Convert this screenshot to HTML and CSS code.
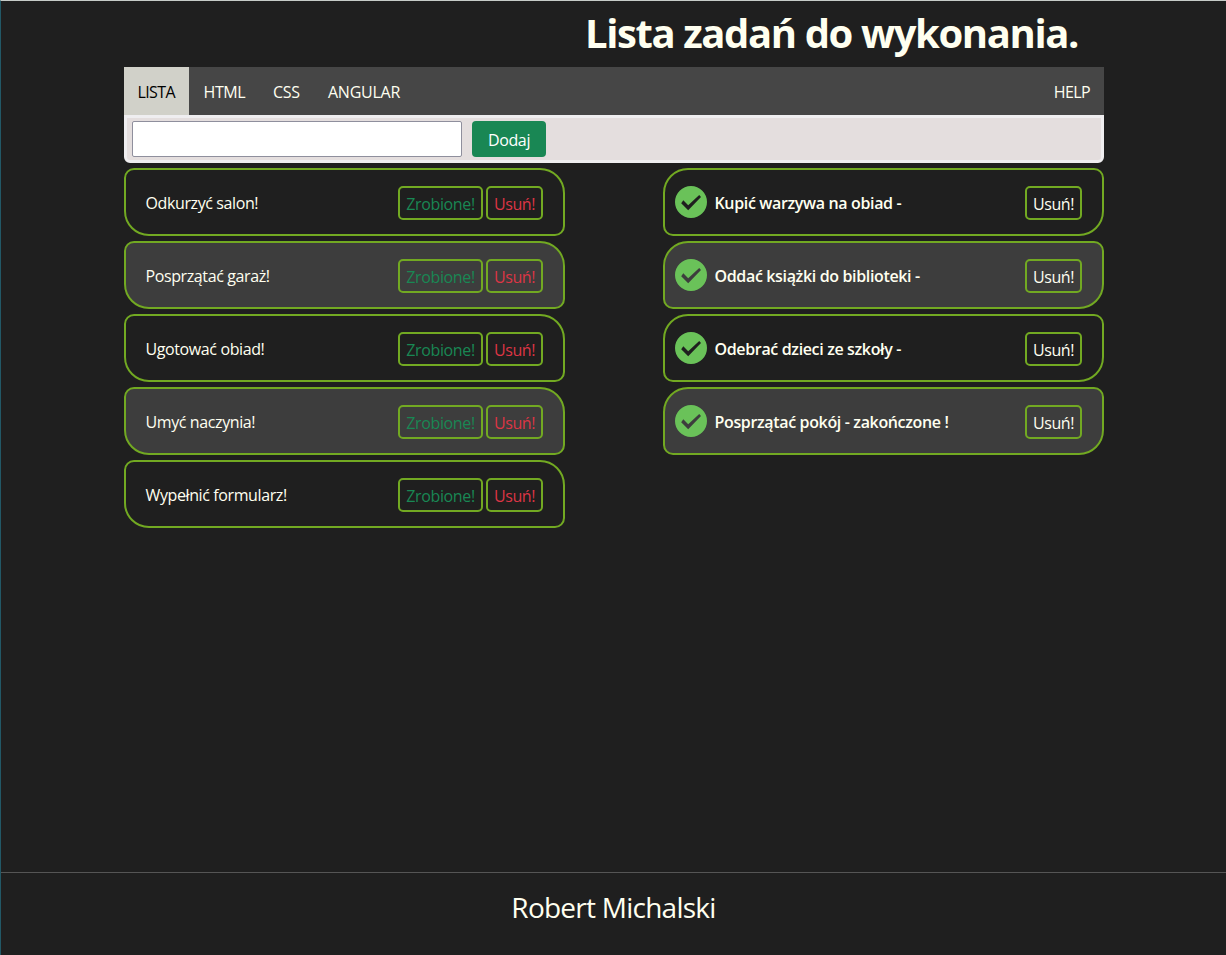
FILE: index.html
```html
<!DOCTYPE html>
<html lang="pl">
<head>
<meta charset="utf-8">
<title>Lista zadań</title>
<link rel="stylesheet" href="styles.css">
</head>
<body>
<svg class="sprite" aria-hidden="true"><symbol id="check" viewBox="0 0 32 32"><path fill="#6ac259" fill-rule="evenodd" d="M16 0a16 16 0 1 0 0 32a16 16 0 1 0 0-32zM24.2 9L26 11L13.2 24.2L6.2 17.2L8.3 14.2L13.2 19.2z"/></symbol></svg>
<div class="page">
<header class="header"><h1 class="title"><span>Lista zadań do wykonania.</span></h1></header>
<nav class="nav">
<a class="tab active"><span>LISTA</span></a>
<a class="tab html"><span>HTML</span></a>
<a class="tab css"><span>CSS</span></a>
<a class="tab angular"><span>ANGULAR</span></a>
<a class="tab help"><span>HELP</span></a>
</nav>
<form class="add"><input class="field" type="text" aria-label="Zadanie"><button class="submit" type="button">Dodaj</button></form>
<main class="columns">
<ul class="list todo">
<li class="task"><span class="name">Odkurzyć salon!</span><button class="btn done">Zrobione!</button><button class="btn remove">Usuń!</button></li>
<li class="task"><span class="name">Posprzątać garaż!</span><button class="btn done">Zrobione!</button><button class="btn remove">Usuń!</button></li>
<li class="task"><span class="name">Ugotować obiad!</span><button class="btn done">Zrobione!</button><button class="btn remove">Usuń!</button></li>
<li class="task"><span class="name">Umyć naczynia!</span><button class="btn done">Zrobione!</button><button class="btn remove">Usuń!</button></li>
<li class="task"><span class="name">Wypełnić formularz!</span><button class="btn done">Zrobione!</button><button class="btn remove">Usuń!</button></li>
</ul>
<ul class="list finished">
<li class="task"><svg class="check"><use href="#check"/></svg><span class="name">Kupić warzywa na obiad -</span><button class="btn">Usuń!</button></li>
<li class="task"><svg class="check"><use href="#check"/></svg><span class="name">Oddać książki do biblioteki -</span><button class="btn">Usuń!</button></li>
<li class="task"><svg class="check"><use href="#check"/></svg><span class="name">Odebrać dzieci ze szkoły -</span><button class="btn">Usuń!</button></li>
<li class="task"><svg class="check"><use href="#check"/></svg><span class="name">Posprzątać pokój - zakończone !</span><button class="btn">Usuń!</button></li>
</ul>
</main>
<footer class="footer"><span>Robert Michalski</span></footer>
</div>
</body>
</html>
```
FILE: styles.css
```css
* { box-sizing: border-box; }
body { margin: 0; background: #1f1f1f; color: ivory; font: 16px/24px "Open Sans", "Noto Sans", sans-serif; letter-spacing: -0.35px; }
.sprite { display: none; }
.page { height: 955px; display: flex; flex-direction: column; border-top: 1px solid #c6cbc8; border-left: 1px solid #225866; overflow: hidden; }
.header, .nav, .add, .columns { width: 980px; margin-left: 123px; flex: none; }
.header { height: 66px; padding: 8px 26px 0 0; }
.title { margin: 0; font-size: 40px; line-height: 48px; font-weight: 700; text-align: right; letter-spacing: -1.4px; white-space: nowrap; }
.nav { height: 48px; display: flex; background: #464646; }
.tab { display: flex; padding-top: 13px; white-space: nowrap; padding-left: 14px; }
.active { width: 65px; padding-left: 13.5px; background: #d1d1c9; color: #000; letter-spacing: -0.6px; }
.html { width: 70px; padding-left: 14.5px; letter-spacing: -0.4px; }
.css { width: 55px; }
.angular { width: 100px; letter-spacing: -0.25px; }
.help { margin-left: auto; padding-right: 14px; letter-spacing: -0.6px; }
.add { height: 48px; display: flex; gap: 10px; padding: 3px 5px; background: #e4dede; border: 3px solid #efeef0; border-radius: 0 0 6px 6px; }
.field { width: 330px; height: 36px; background: #fff; border: 1px solid #8f8f9d; border-radius: 2px; }
.submit { width: 74px; height: 36px; padding: 2px 0 0; border: 0; border-radius: 4px; background: #198754; color: #fff; font: inherit; letter-spacing: -0.35px; }
.columns { display: flex; justify-content: space-between; padding-top: 5px; }
.list { width: 441px; margin: 0; padding: 0; list-style: none; display: flex; flex-direction: column; gap: 5px; }
.task { height: 68px; display: flex; align-items: flex-start; border: 2px solid #72a922; padding: 16px 20px 0 19.5px; }
.task:nth-child(even) { background: #3d3d3d; }
.todo .task { border-radius: 10px 25px 10px 25px; }
.finished .task { border-radius: 25px 10px 25px 10px; padding-left: 10px; }
.name { flex: 1; padding-top: 5px; white-space: nowrap; letter-spacing: -0.39px; }
.finished .name { font-weight: 600; padding-left: 7.5px; letter-spacing: -0.35px; }
.check { width: 32px; height: 32px; flex: none; }
.btn { width: 57px; height: 34px; padding: 2px 0 0; border: 2px solid #72a922; border-radius: 5px; background: transparent; color: ivory; font: inherit; letter-spacing: -0.4px; }
.done { width: 85px; margin-right: 3px; color: #198754; letter-spacing: -0.35px; }
.remove { color: #dc3545; }
.footer { height: 83px; margin-top: auto; border-top: 1px solid #555; padding-top: 13px; text-align: center; font-size: 28px; line-height: 42px; letter-spacing: -0.75px; }
```
